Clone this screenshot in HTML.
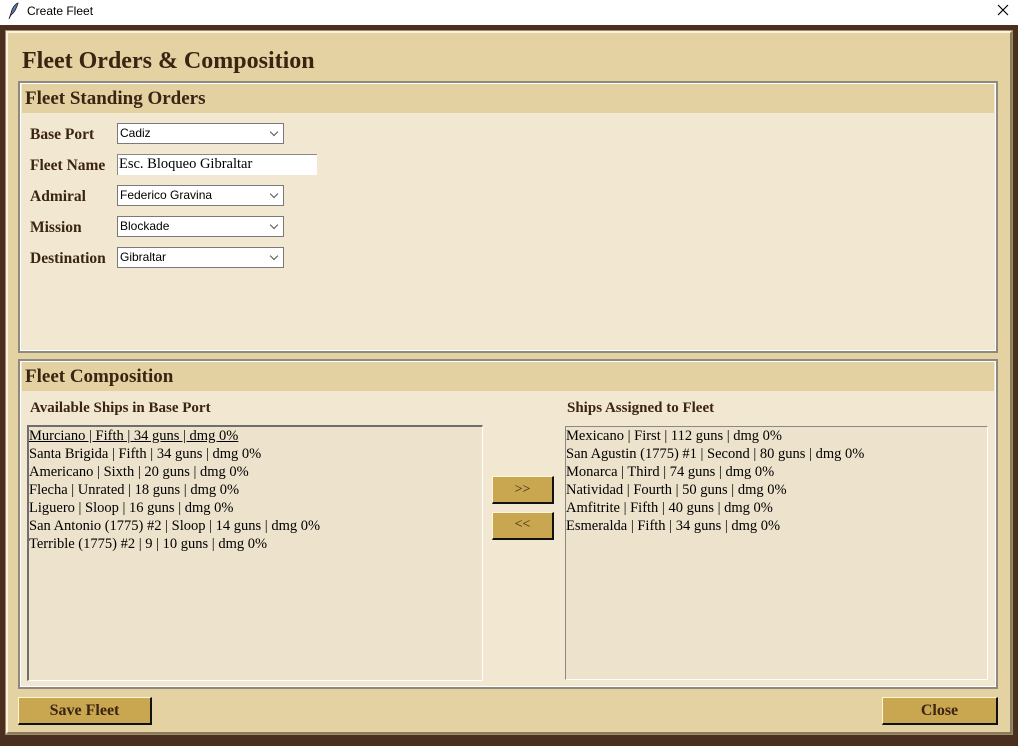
<!DOCTYPE html>
<html><head><meta charset="utf-8"><style>
*{margin:0;padding:0;box-sizing:border-box}
body{width:1018px;height:746px;overflow:hidden;background:#4a2e1e;font-family:"Liberation Serif",serif;color:#3a2412;position:relative}
.tb{position:absolute;left:0;top:0;width:1018px;height:25px;background:#fff;font-family:"Liberation Sans",sans-serif;font-size:12px;color:#000}
.tb span{position:absolute;left:27px;top:4px}
.abs{position:absolute}
.main{left:6px;top:31px;width:1006px;height:703px;background:#e5d2a2;border:2px solid #fbf3df;border-right-color:#8a7a60;border-bottom-color:#8a7a60;outline:1px solid #a08c68}
.sec{background:#f2e7d1;border:2px solid #8f8a80;box-shadow:inset 0 0 0 1px #fff}
.hdr{position:absolute;left:2px;right:2px;top:1px;height:29px;background:#e3d1a2;font-weight:bold;font-size:19px;padding:4px 0 0 3px}
.lbl{position:absolute;left:30px;font-weight:bold;font-size:15.5px}
.cb{position:absolute;left:117px;width:167px;height:21px;background:#fff;border:1px solid #7a7a7a;font-family:"Liberation Sans",sans-serif;font-size:12px;padding:2px 0 0 2px;color:#000}
.cb:after{content:"";position:absolute;right:6px;top:5px;width:5px;height:5px;border-right:1px solid #555;border-bottom:1px solid #555;transform:rotate(45deg)}
.lb{background:#ede2cb;border:1px solid #7a7a7a;font-size:14.5px;color:#000;line-height:18px;padding:0 0 0 0}
.lb2{border-left:2px solid #6e6e6e;border-top:2px solid #6e6e6e;border-right:1px solid #fff;border-bottom:1px solid #fff}
.btn{position:absolute;background:#c9a650;border:1px solid #fff6d8;border-right:2px solid #111;border-bottom:2px solid #111;text-align:center;font-size:14px;color:#3a2412}
.bb{font-weight:bold;font-size:16px;padding-top:4px}
</style></head><body>
<div class="tb"><svg class="abs" style="left:7px;top:2px" width="12" height="18" viewBox="0 0 12 18"><path d="M2 17 L4 11 C5 6 8 2 11 1 C10 5 8 10 4 13 Z" fill="#5a7aa8" stroke="#223" stroke-width="0.8"/></svg><span>Create Fleet</span>
<svg class="abs" style="left:997px;top:4px" width="12" height="12"><path d="M1 1L11 11M11 1L1 11" stroke="#000" stroke-width="1.2"/></svg></div>
<div class="abs main"></div>
<div class="abs" style="left:22px;top:48px;font-size:24px;font-weight:bold">Fleet Orders &amp; Composition</div>

<div class="abs sec" style="left:18px;top:81px;width:980px;height:272px"><div class="hdr">Fleet Standing Orders</div></div>
<div class="lbl" style="top:126px">Base Port</div>
<div class="lbl" style="top:157px">Fleet Name</div>
<div class="lbl" style="top:188px">Admiral</div>
<div class="lbl" style="top:219px">Mission</div>
<div class="lbl" style="top:250px">Destination</div>
<div class="cb" style="top:123px">Cadiz</div>
<div class="abs" style="left:117px;top:154px;width:200px;height:21px;background:#fff;border-left:1px solid #888;border-top:1px solid #888;font-size:14.5px;padding:1px 0 0 1px;color:#000">Esc. Bloqueo Gibraltar</div>
<div class="cb" style="top:185px">Federico Gravina</div>
<div class="cb" style="top:216px">Blockade</div>
<div class="cb" style="top:247px">Gibraltar</div>

<div class="abs sec" style="left:18px;top:359px;width:980px;height:330px"><div class="hdr">Fleet Composition</div></div>
<div class="abs" style="left:30px;top:400px;font-weight:bold;font-size:15px">Available Ships in Base Port</div>
<div class="abs" style="left:567px;top:400px;font-weight:bold;font-size:15px">Ships Assigned to Fleet</div>
<div class="abs lb lb2" style="left:27px;top:425px;width:456px;height:256px"><div style="text-decoration:underline">Murciano | Fifth | 34 guns | dmg 0%</div><div>Santa Brigida | Fifth | 34 guns | dmg 0%</div><div>Americano | Sixth | 20 guns | dmg 0%</div><div>Flecha | Unrated | 18 guns | dmg 0%</div><div>Liguero | Sloop | 16 guns | dmg 0%</div><div>San Antonio (1775) #2 | Sloop | 14 guns | dmg 0%</div><div>Terrible (1775) #2 | 9 | 10 guns | dmg 0%</div></div>
<div class="abs lb" style="left:565px;top:426px;width:423px;height:254px;border-color:#888 #fff #fff #888"><div>Mexicano | First | 112 guns | dmg 0%</div><div>San Agustin (1775) #1 | Second | 80 guns | dmg 0%</div><div>Monarca | Third | 74 guns | dmg 0%</div><div>Natividad | Fourth | 50 guns | dmg 0%</div><div>Amfitrite | Fifth | 40 guns | dmg 0%</div><div>Esmeralda | Fifth | 34 guns | dmg 0%</div></div>
<div class="btn" style="left:492px;top:476px;width:62px;height:28px;padding-top:5px">&gt;&gt;</div>
<div class="btn" style="left:492px;top:512px;width:62px;height:28px;padding-top:4px">&lt;&lt;</div>
<div class="btn bb" style="left:18px;top:697px;width:134px;height:28px">Save Fleet</div>
<div class="btn bb" style="left:882px;top:697px;width:116px;height:28px">Close</div>
</body></html>
